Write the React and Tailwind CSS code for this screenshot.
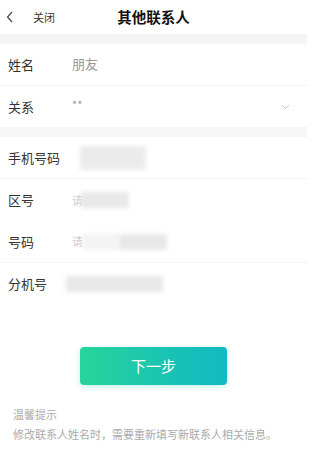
import React from "react";

function Row({ label, children, border = true, h = 42 }) {
  return (
    <div
      className={`flex items-center px-[8px] ${border ? "border-b border-[#f2f2f2]" : ""}`}
      style={{ height: h }}
    >
      <div className="w-[64px] text-[13px] text-[#333]">{label}</div>
      <div className="flex-1 flex items-center">{children}</div>
    </div>
  );
}

function Blur({ w, h = 16, ml = 0, c = "#e8e8e8" }) {
  return <div className="blur-[2px]" style={{ width: w, height: h, marginLeft: ml, background: c }} />;
}

export default function App() {
  return (
    <div className="w-[307px] h-[452px] bg-white overflow-hidden" style={{ fontFamily: '"Noto Sans CJK SC", "Noto Sans", sans-serif' }}>
      <div className="relative h-[34px] flex items-center">
        <svg className="ml-[5px]" width="10" height="14" viewBox="0 0 10 14">
          <path d="M7 2 L2.5 7 L7 12" fill="none" stroke="#444" strokeWidth="1.2" />
        </svg>
        <span className="ml-[18px] text-[11px] text-[#333]">关闭</span>
        <div className="absolute left-0 right-0 top-0 h-[34px] flex items-center justify-center pointer-events-none">
          <span className="text-[14.5px] font-bold text-[#111]">其他联系人</span>
        </div>
      </div>
      <div className="h-[10px] bg-[#f5f5f5]" />
      <Row label="姓名" h={42}>
        <span className="text-[13px] text-[#999] -mt-[2px]">朋友</span>
      </Row>
      <div className="flex items-center h-[41px] px-[8px]">
        <div className="w-[64px] text-[13px] text-[#333]">关系</div>
        <div className="flex-1 text-[11px] text-[#999] -mt-[4px]">**</div>
        <svg className="mr-[9px]" width="9" height="6" viewBox="0 0 9 6">
          <path d="M1 1 L4.5 4.5 L8 1" fill="none" stroke="#ccc" strokeWidth="1" />
        </svg>
      </div>
      <div className="h-[10px] bg-[#f6f6f6]" />
      <Row label="手机号码">
        <Blur w={66} h={24} ml={8} c="#ebebeb" />
      </Row>
      <Row label="区号" border={false}>
        <span className="text-[11px] text-[#ccc]">请</span>
        <Blur w={48} h={16} ml={-2} />
      </Row>
      <Row label="号码">
        <span className="text-[11px] text-[#ccc]">请</span>
        <Blur w={36} h={16} ml={0} c="#f3f3f3" />
        <Blur w={48} h={16} ml={0} />
      </Row>
      <Row label="分机号" border={false}>
        <Blur w={97} h={16} ml={-6} />
      </Row>
      <div className="flex justify-center mt-[42px]">
        <div className="w-[147px] h-[38px] rounded-[4px] bg-gradient-to-r from-[#27d49a] to-[#12b8c2] shadow-[0_2px_6px_rgba(30,200,170,0.25)] flex items-center justify-center text-white text-[15px]">
          下一步
        </div>
      </div>
      <div className="mt-[21px] px-[13px] text-[11px] text-[#aaa]">温馨提示</div>
      <div className="mt-[3px] px-[13px] text-[11px] text-[#aaa] whitespace-nowrap">修改联系人姓名时，需要重新填写新联系人相关信息。</div>
    </div>
  );
}
